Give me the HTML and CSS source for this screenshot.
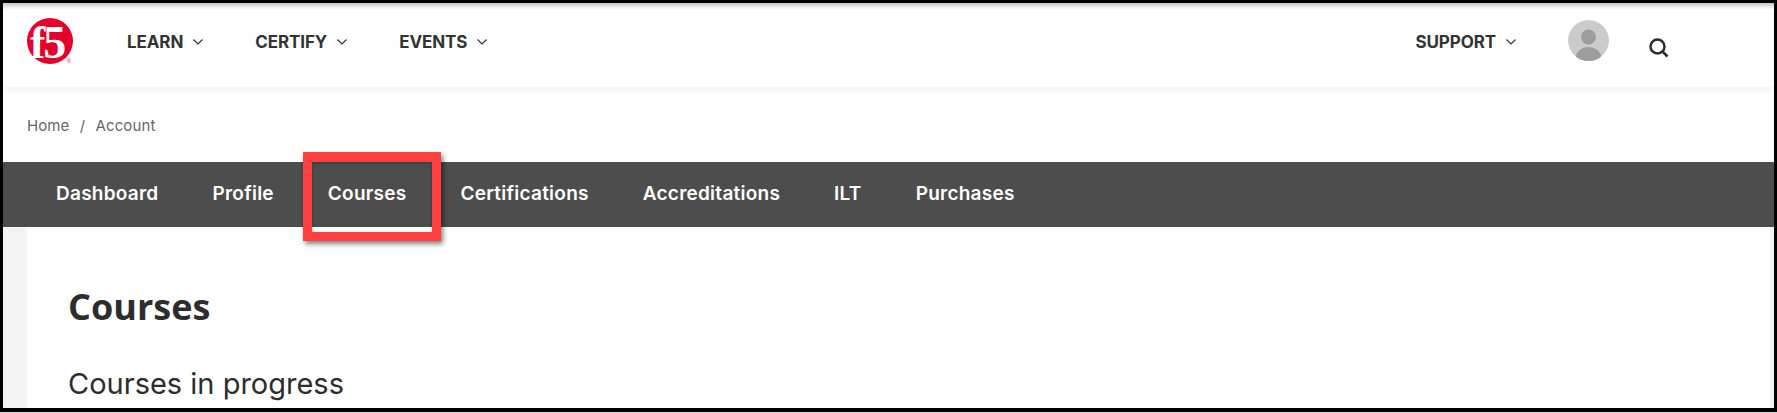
FILE: index.html
```html
<!DOCTYPE html>
<html lang="en">
<head>
    <meta charset="UTF-8">
    <title>Courses</title>
    <link rel="stylesheet" href="styles.css">
</head>
<body>
    <div class="frame">
        <header class="top-bar">
            <svg class="logo" width="46" height="46" viewBox="0 0 46 46">
                <circle cx="23" cy="23" r="23" fill="#e4002b"/>
                <text x="3" y="40" class="logo-text">f5</text>
                <text x="40" y="45" class="logo-mark">®</text>
            </svg>
            <nav class="main-menu">
                <a class="menu-item">LEARN <svg class="chevron" width="10" height="6" viewBox="0 0 10 6"><path d="M0.5 0.5 L5 5 L9.5 0.5"/></svg></a>
                <a class="menu-item">CERTIFY <svg class="chevron" width="10" height="6" viewBox="0 0 10 6"><path d="M0.5 0.5 L5 5 L9.5 0.5"/></svg></a>
                <a class="menu-item">EVENTS <svg class="chevron" width="10" height="6" viewBox="0 0 10 6"><path d="M0.5 0.5 L5 5 L9.5 0.5"/></svg></a>
            </nav>
            <div class="right-menu">
                <a class="menu-item">SUPPORT <svg class="chevron" width="10" height="6" viewBox="0 0 10 6"><path d="M0.5 0.5 L5 5 L9.5 0.5"/></svg></a>
                <svg class="avatar" width="41" height="41" viewBox="0 0 41 41">
                    <defs><clipPath id="avatar-clip"><circle cx="20.5" cy="20.5" r="20.5"/></clipPath></defs>
                    <circle cx="20.5" cy="20.5" r="20.5" fill="#cbcbcb"/>
                    <g clip-path="url(#avatar-clip)" fill="#9d9d9d">
                        <circle cx="20.5" cy="17" r="7.5"/>
                        <ellipse cx="20.5" cy="37" rx="12.5" ry="10"/>
                    </g>
                </svg>
                <svg class="search" width="20" height="20" viewBox="0 0 20 20">
                    <circle cx="8.5" cy="8.5" r="7"/>
                    <path d="M13.5 13.5 L18.5 18.5"/>
                </svg>
            </div>
        </header>
        <div class="breadcrumb">Home <span class="sep">/</span> Account</div>
        <nav class="account-nav">
            <a>Dashboard</a>
            <a>Profile</a>
            <a>Courses</a>
            <a>Certifications</a>
            <a>Accreditations</a>
            <a>ILT</a>
            <a>Purchases</a>
        </nav>
        <div class="page-body">
            <main class="content">
                <h1>Courses</h1>
                <h2>Courses in progress</h2>
            </main>
        </div>
        <div class="highlight"></div>
    </div>
</body>
</html>
```

FILE: styles.css
```css
* {
    box-sizing: border-box;
}
body {
    margin: 0;
    height: 413px;
    overflow: hidden;
    background: #d8d8d8;
    font-family: "Inter", Arial, sans-serif;
}
.frame {
    position: relative;
    height: 412px;
    border: solid #000;
    border-width: 3px 3px 4px 3px;
    background: #fff;
    overflow: hidden;
}

/* Top header */
.top-bar {
    position: relative;
    height: 84px;
    display: flex;
    align-items: center;
    padding-left: 24px;
    background: linear-gradient(#c4c4c4 0, #ececec 4px, #fff 7px);
    box-shadow: 0 2px 8px rgba(0, 0, 0, 0.07);
}
.logo {
    margin-top: -8px;
    overflow: visible;
}
.logo-text {
    font-family: "Liberation Serif", serif;
    font-weight: 700;
    font-size: 46px;
    letter-spacing: -2px;
    fill: #fff;
}
.logo-mark {
    font-family: "Liberation Sans", sans-serif;
    font-size: 5px;
    fill: #e4002b;
}
.main-menu {
    display: flex;
    gap: 52px;
    margin-left: 54px;
}
.menu-item {
    display: flex;
    align-items: center;
    gap: 10px;
    margin-top: -6px;
    font-size: 17px;
    font-weight: 700;
    letter-spacing: -0.1px;
    color: #333;
    white-space: nowrap;
}
.chevron {
    fill: none;
    stroke: #333;
    stroke-width: 1.2;
}
.right-menu {
    display: flex;
    align-items: center;
    margin-left: auto;
    padding-right: 105px;
}
.avatar {
    margin-left: 52px;
    margin-top: -10px;
}
.search {
    margin-left: 40px;
    margin-top: 6px;
    fill: none;
    stroke: #2d2d2d;
    stroke-width: 2.5;
}

/* Breadcrumb */
.breadcrumb {
    height: 75px;
    padding: 29px 0 0 24px;
    font-size: 15px;
    letter-spacing: 0.1px;
    color: #666;
}
.sep {
    margin: 0 6px;
}

/* Account tabs */
.account-nav {
    height: 65px;
    display: flex;
    align-items: center;
    gap: 54px;
    padding-left: 53px;
    padding-bottom: 2px;
    background: #4d4d4d;
}
.account-nav a {
    font-size: 19px;
    font-weight: 600;
    letter-spacing: 0.25px;
    color: #fff;
}

/* Page content */
.page-body {
    height: 181px;
    padding: 0 4px 0 24px;
    background: #f3f3f3;
}
.content {
    height: 100%;
    padding: 55px 0 0 41px;
    background: #fff;
}
h1 {
    margin: 0;
    font-family: "Open Sans", Arial, sans-serif;
    font-size: 36px;
    line-height: 50px;
    font-weight: 700;
    color: #2d2d2d;
}
h2 {
    margin: 32px 0 0;
    font-size: 29px;
    line-height: 40px;
    font-weight: 400;
    color: #2d2d2d;
}

/* Red annotation round the Courses tab */
.highlight {
    position: absolute;
    left: 300px;
    top: 149px;
    width: 138px;
    height: 89px;
    border: solid #ff4040;
    border-width: 10px 9px 9px 9px;
    box-shadow: 2px 3px 5px rgba(0, 0, 0, 0.5), inset 0 1px 3px rgba(0, 0, 0, 0.3);
}
```
